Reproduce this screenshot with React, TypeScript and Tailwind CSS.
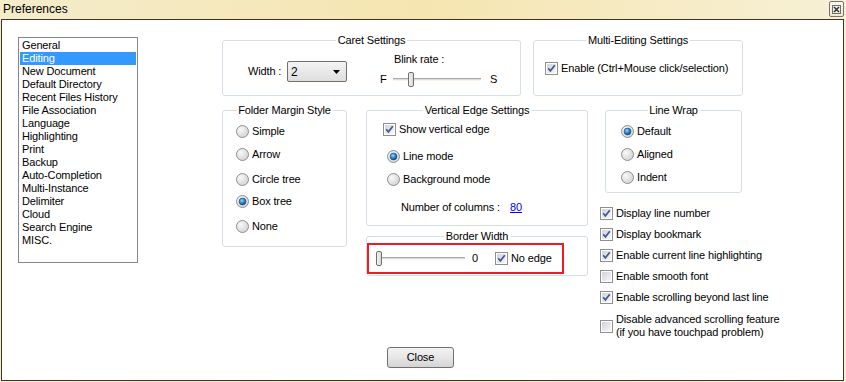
import React from "react";

const categories = [
  "General",
  "Editing",
  "New Document",
  "Default Directory",
  "Recent Files History",
  "File Association",
  "Language",
  "Highlighting",
  "Print",
  "Backup",
  "Auto-Completion",
  "Multi-Instance",
  "Delimiter",
  "Cloud",
  "Search Engine",
  "MISC.",
];

function Defs() {
  return (
    <svg width="0" height="0" className="absolute">
      <defs>
        <linearGradient id="boxFill" x1="0" y1="0" x2="1" y2="1">
          <stop offset="0" stopColor="#cfd3d9" />
          <stop offset="1" stopColor="#f7f7f7" />
        </linearGradient>
        <radialGradient id="radioFill" cx="0.35" cy="0.35" r="0.8">
          <stop offset="0" stopColor="#f9f9f9" />
          <stop offset="1" stopColor="#cdcdcd" />
        </radialGradient>
        <radialGradient id="dotFill" cx="0.4" cy="0.35" r="0.7">
          <stop offset="0" stopColor="#8fd6fb" />
          <stop offset="0.55" stopColor="#2a86cc" />
          <stop offset="1" stopColor="#0d3f7a" />
        </radialGradient>
      </defs>
    </svg>
  );
}

function CheckBox({ checked }: { checked?: boolean }) {
  return (
    <svg width="13" height="13" viewBox="0 0 13 13" className="shrink-0">
      <rect x="0.5" y="0.5" width="12" height="12" fill="#fff" stroke="#8e8f8f" />
      <rect x="2" y="2" width="9" height="9" fill="url(#boxFill)" />
      {checked && (
        <path
          d="M3.2 6.3 L5.4 8.8 L9.8 3.2"
          fill="none"
          stroke="#3f5893"
          strokeWidth="1.7"
        />
      )}
    </svg>
  );
}

function Radio({ checked }: { checked?: boolean }) {
  return (
    <svg width="13" height="13" viewBox="0 0 13 13" className="shrink-0">
      <circle cx="6.5" cy="6.5" r="6" fill="url(#radioFill)" stroke="#8e8f8f" />
      {checked && (
        <circle cx="6.5" cy="6.5" r="3.4" fill="url(#dotFill)" stroke="#1b3e6e" strokeWidth="0.6" />
      )}
    </svg>
  );
}

function Slider({ width, thumb }: { width: number; thumb: number }) {
  return (
    <div className="relative h-[15px] flex items-center" style={{ width }}>
      <div className="w-full h-[3px] border-t border-[#a9a9a9] border-b border-b-[#f4f4f4] bg-[#dcdcdc]" />
      <div
        className="absolute top-0 w-[6px] h-[15px] rounded-[2px] border border-[#6f6f6f] bg-linear-to-r from-[#f3f3f3] to-[#d9d9d9]"
        style={{ left: thumb }}
      />
    </div>
  );
}

function Group({
  title,
  className,
  children,
}: {
  title: string;
  className: string;
  children?: React.ReactNode;
}) {
  return (
    <div className={"relative border border-[#d5dfe5] rounded-[3px] " + className}>
      <span className="absolute -top-[7px] left-1/2 -translate-x-1/2 bg-white px-[2px] leading-[13px] whitespace-nowrap">
        {title}
      </span>
      {children}
    </div>
  );
}

function RadioRow({ label, checked, className }: { label: string; checked?: boolean; className: string }) {
  return (
    <div className={"flex items-center gap-[3px] h-[13px] leading-[13px] " + className}>
      <Radio checked={checked} />
      <span>{label}</span>
    </div>
  );
}

function CheckRow({ label, checked, className }: { label: string; checked?: boolean; className: string }) {
  return (
    <div className={"flex items-center gap-[3px] h-[13px] leading-[13px] whitespace-nowrap " + className}>
      <CheckBox checked={checked} />
      <span>{label}</span>
    </div>
  );
}

export default function App() {
  return (
    <div className="w-[846px] h-[382px] overflow-hidden bg-linear-to-r from-[#f4eccb] via-[#f5e5b0] to-[#f7f0d5] font-['Liberation_Sans',Arial,sans-serif] text-[11px] tracking-[-0.14px] text-black">
      <Defs />
      {/* Title bar */}
      <div className="h-[19px] flex items-start justify-between">
        <span className="pl-[3px] pt-[1px] text-[12px] leading-[16px] tracking-normal">Preferences</span>
        <div className="mt-[1px] mr-[2px] w-[15px] h-[16px] rounded-[2px] border border-[#7c7363] bg-linear-to-b from-[#fdfcf6] to-[#efe8d2] flex items-center justify-center">
          <svg width="9" height="9" viewBox="0 0 9 9">
            <rect x="0.5" y="0.5" width="8" height="8" fill="none" stroke="#6d6d6d" />
            <path d="M2 2 L7 7 M7 2 L2 7" stroke="#333" strokeWidth="1.5" />
          </svg>
        </div>
      </div>

      {/* Client area */}
      <div className="ml-px w-[843px] h-[362px] border border-[#3d3323] bg-white flex flex-col">
        <div className="flex h-[327px] pl-[16px] pt-[17px]">
          {/* Category list */}
          <div className="w-[120px] h-[226px] border border-[#828790] p-[1px] shrink-0">
            {categories.map((c) => (
              <div
                key={c}
                className={
                  "h-[13px] leading-[13px] pl-[2px] whitespace-nowrap " +
                  (c === "Editing" ? "bg-[#3399ff] text-white" : "")
                }
              >
                {c}
              </div>
            ))}
          </div>

          {/* Settings */}
          <div className="ml-[84px] mt-[3px] flex flex-col">
            <div className="flex gap-[12px]">
              <Group title="Caret Settings" className="w-[299px] h-[56px] flex">
                <div className="ml-[25px] mt-[20px] w-[99px] h-[21px] flex items-center justify-between">
                  <span>Width :</span>
                  <div className="w-[60px] h-[21px] rounded-[2px] border border-[#707070] bg-linear-to-b from-[#f4f4f4] to-[#dedede] flex items-center justify-between pl-[3px] pr-[6px]">
                    <span className="text-[12px]">2</span>
                    <svg width="7" height="4" viewBox="0 0 7 4">
                      <path d="M0 0 H7 L3.5 4 Z" fill="#000" />
                    </svg>
                  </div>
                </div>
                <div className="ml-[33px] mt-[12px] flex flex-col">
                  <span className="ml-[14px] leading-[13px]">Blink rate :</span>
                  <div className="mt-[6px] flex items-center h-[15px]">
                    <span className="w-[7px]">F</span>
                    <div className="ml-[6px]">
                      <Slider width={88} thumb={15} />
                    </div>
                    <span className="ml-[9px]">S</span>
                  </div>
                </div>
              </Group>
              <Group title="Multi-Editing Settings" className="w-[210px] h-[56px]">
                <CheckRow label="Enable (Ctrl+Mouse click/selection)" checked className="ml-[11px] mt-[21px]" />
              </Group>
            </div>

            <div className="mt-[14px] flex items-start">
              <Group title="Folder Margin Style" className="w-[125px] h-[137px] pl-[13px] flex flex-col">
                <RadioRow label="Simple" className="mt-[14px]" />
                <RadioRow label="Arrow" className="mt-[10px]" />
                <RadioRow label="Circle tree" className="mt-[12px]" />
                <RadioRow label="Box tree" checked className="mt-[9px]" />
                <RadioRow label="None" className="mt-[12px]" />
              </Group>

              <div className="ml-[19px] flex flex-col">
                <Group title="Vertical Edge Settings" className="w-[222px] h-[116px] pl-[16px] flex flex-col">
                  <CheckRow label="Show vertical edge" checked className="mt-[12px]" />
                  <RadioRow label="Line mode" checked className="mt-[14px] ml-[4px]" />
                  <RadioRow label="Background mode" className="mt-[10px] ml-[4px]" />
                  <div className="mt-[15px] ml-[18px] flex h-[13px] leading-[13px]">
                    <span className="w-[109px]">Number of columns :</span>
                    <span className="text-[#0000ff] underline">80</span>
                  </div>
                </Group>
                <Group title="Border Width" className="mt-[10px] w-[222px] h-[40px]">
                  <div className="absolute left-0 top-[6px] w-[197px] h-[31px] border-2 border-[#ec1c24]" />
                  <div className="ml-[9px] mt-[14px] flex items-center h-[15px]">
                    <Slider width={89} thumb={0} />
                    <span className="ml-[7px] w-[23px]">0</span>
                    <CheckRow label="No edge" checked className="" />
                  </div>
                </Group>
              </div>

              <div className="ml-[12px] flex flex-col">
                <Group title="Line Wrap" className="ml-[5px] w-[137px] h-[83px] pl-[15px] flex flex-col">
                  <RadioRow label="Default" checked className="mt-[14px]" />
                  <RadioRow label="Aligned" className="mt-[10px]" />
                  <RadioRow label="Indent" className="mt-[10px]" />
                </Group>
                <CheckRow label="Display line number" checked className="mt-[14px]" />
                <CheckRow label="Display bookmark" checked className="mt-[8px]" />
                <CheckRow label="Enable current line highlighting" checked className="mt-[8px]" />
                <CheckRow label="Enable smooth font" className="mt-[8px]" />
                <CheckRow label="Enable scrolling beyond last line" checked className="mt-[8px]" />
                <div className="mt-[9px] flex items-center gap-[3px] leading-[13px] whitespace-nowrap">
                  <CheckBox />
                  <span>
                    Disable advanced scrolling feature
                    <br />
                    (if you have touchpad problem)
                  </span>
                </div>
              </div>
            </div>
          </div>
        </div>

        <button className="ml-[385px] w-[67px] h-[21px] rounded-[3px] border border-[#707070] bg-linear-to-b from-[#f3f3f3] via-[#e6e6e6] to-[#d4d4d4] leading-[13px]">
          Close
        </button>
      </div>
    </div>
  );
}
